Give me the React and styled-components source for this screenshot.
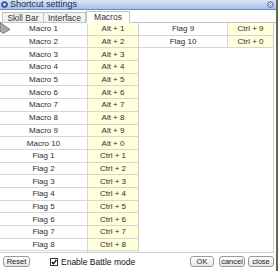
import React from 'react';
import styled, { createGlobalStyle } from 'styled-components';

const Global = createGlobalStyle`
  html, body {
    margin: 0;
    padding: 0;
    background: #5d6b4c;
  }
  body {
    font-family: "Liberation Sans", Arial, sans-serif;
  }
`;

const Window = styled.div`
  position: relative;
  width: 276px;
  height: 271px;
  background: #ffffff;
  display: flex;
  flex-direction: column;
  overflow: hidden;
`;

const TitleBar = styled.div`
  height: 9px;
  display: flex;
  align-items: center;
  padding: 0 2px 0 1px;
  background: linear-gradient(#dbe5f7, #a9bfe6);
  border-bottom: 1px solid #6f8cc0;
  font-size: 9px;
  line-height: 9px;
  color: #1c2b57;
`;

const TitleText = styled.span`
  flex: 1;
  margin-left: 2px;
`;

const Tabs = styled.div`
  height: 12px;
  display: flex;
  align-items: flex-end;
  padding-left: 2px;
  border-bottom: 1px solid #c4c4c4;
`;

const Tab = styled.div`
  width: ${p => p.$w}px;
  height: ${p => (p.$active ? 12 : 10)}px;
  margin-bottom: ${p => (p.$active ? -1 : 0)}px;
  box-sizing: border-box;
  display: flex;
  align-items: center;
  justify-content: center;
  font-size: 8.5px;
  color: #333;
  background: ${p => (p.$active ? '#ffffff' : '#f3f3f3')};
  border: 1px solid #c4c4c4;
  border-bottom: ${p => (p.$active ? '1px solid #ffffff' : 'none')};
  border-left: ${p => (p.$first || p.$active ? '1px solid #c4c4c4' : 'none')};
`;

const Panel = styled.div`
  height: 229px;
  display: flex;
  border-right: 1px solid #cfcfcf;
  border-bottom: 1px solid #cfcfcf;
  margin-right: 2px;
`;

const Table = styled.div`
  width: ${p => p.$w}px;
  display: flex;
  flex-direction: column;
  border-right: ${p => (p.$sep ? '1px solid #cfcfcf' : 'none')};
`;

const Row = styled.div`
  height: 12.7px;
  box-sizing: border-box;
  display: flex;
  border-bottom: 1px solid #d6d6d6;
`;

const Cell = styled.div`
  width: ${p => p.$w}px;
  flex: ${p => (p.$grow ? 1 : 'none')};
  display: flex;
  align-items: center;
  justify-content: center;
  font-size: 8px;
  color: #2e2e2e;
  background: ${p => (p.$key ? '#ffffdc' : '#ffffff')};
  border-left: ${p => (p.$key ? '1px solid #d6d6d6' : 'none')};
`;

const Filler = styled.div`
  flex: 1;
  display: flex;
`;

const FillKey = styled.div`
  margin-left: 87px;
  flex: 1;
  background: #ffffdc;
  border-left: 1px solid #d6d6d6;
`;

const Footer = styled.div`
  flex: 1;
  display: flex;
  align-items: center;
  padding: 0 2px 1px 3px;
`;

const Button = styled.button`
  height: 11px;
  width: ${p => p.$w}px;
  margin-left: ${p => p.$ml || 0}px;
  padding: 0;
  box-sizing: border-box;
  border: 1px solid #9a9a9a;
  border-radius: 3px;
  background: linear-gradient(#ffffff, #e6e6e6);
  font-family: "Liberation Sans", Arial, sans-serif;
  font-size: 7.5px;
  line-height: 9px;
  color: #222;
`;

const Check = styled.label`
  display: flex;
  align-items: center;
  margin-left: 20px;
  font-size: 8.5px;
  color: #111;
`;

const Box = styled.span`
  width: 8px;
  height: 8px;
  box-sizing: border-box;
  border: 1px solid #333;
  background: #fff;
  margin-right: 3px;
  display: flex;
`;

const Spacer = styled.div`
  flex: 1;
`;

const Pointer = styled.svg`
  position: absolute;
  left: 0;
  top: 22px;
`;

const macros = [
  ['Macro 1', 'Alt + 1'], ['Macro 2', 'Alt + 2'], ['Macro 3', 'Alt + 3'],
  ['Macro 4', 'Alt + 4'], ['Macro 5', 'Alt + 5'], ['Macro 6', 'Alt + 6'],
  ['Macro 7', 'Alt + 7'], ['Macro 8', 'Alt + 8'], ['Macro 9', 'Alt + 9'],
  ['Macro 10', 'Alt + 0'],
  ['Flag 1', 'Ctrl + 1'], ['Flag 2', 'Ctrl + 2'], ['Flag 3', 'Ctrl + 3'],
  ['Flag 4', 'Ctrl + 4'], ['Flag 5', 'Ctrl + 5'], ['Flag 6', 'Ctrl + 6'],
  ['Flag 7', 'Ctrl + 7'], ['Flag 8', 'Ctrl + 8'],
];

const flags = [['Flag 9', 'Ctrl + 9'], ['Flag 10', 'Ctrl + 0']];

const App = () => (
  <>
    <Global />
    <Window>
      <TitleBar>
        <svg width="7" height="7" viewBox="0 0 7 7">
          <circle cx="3.5" cy="3.5" r="3" fill="#3d64b4" stroke="#1d3b7a" strokeWidth="0.6" />
          <circle cx="3.5" cy="3.5" r="1.2" fill="#ffffff" />
        </svg>
        <TitleText>Shortcut settings</TitleText>
        <svg width="7" height="7" viewBox="0 0 7 7">
          <circle cx="3.5" cy="3.5" r="3" fill="#8ea4cc" stroke="#5a6f99" strokeWidth="0.6" />
          <path d="M2 2 L5 5 M5 2 L2 5" stroke="#ffffff" strokeWidth="0.9" />
        </svg>
      </TitleBar>
      <Tabs>
        <Tab $w={42} $first>Skill Bar</Tab>
        <Tab $w={42}>Interface</Tab>
        <Tab $w={44} $active>Macros</Tab>
      </Tabs>
      <Panel>
        <Table $w={138} $sep>
          {macros.map(([name, key]) => (
            <Row key={name}>
              <Cell $w={87}>{name}</Cell>
              <Cell $grow $key>{key}</Cell>
            </Row>
          ))}
          <Filler><FillKey /></Filler>
        </Table>
        <Table $w={134}>
          {flags.map(([name, key]) => (
            <Row key={name}>
              <Cell $w={88}>{name}</Cell>
              <Cell $grow $key>{key}</Cell>
            </Row>
          ))}
        </Table>
      </Panel>
      <Footer>
        <Button $w={27}>Reset</Button>
        <Check>
          <Box>
            <svg width="6" height="6" viewBox="0 0 6 6">
              <path d="M0.8 3 L2.4 4.8 L5.4 0.8" fill="none" stroke="#000" strokeWidth="1.3" />
            </svg>
          </Box>
          Enable Battle mode
        </Check>
        <Spacer />
        <Button $w={24}>OK</Button>
        <Button $w={26} $ml={5}>cancel</Button>
        <Button $w={26} $ml={3}>close</Button>
      </Footer>
      <Pointer width="11" height="13" viewBox="0 0 11 13">
        <path d="M0 0.5 L10 7.5 L3 11.5 L0 9 Z" fill="#a9a9a9" stroke="#6a6a6a" strokeWidth="0.8" />
      </Pointer>
    </Window>
  </>
);

export default App;
